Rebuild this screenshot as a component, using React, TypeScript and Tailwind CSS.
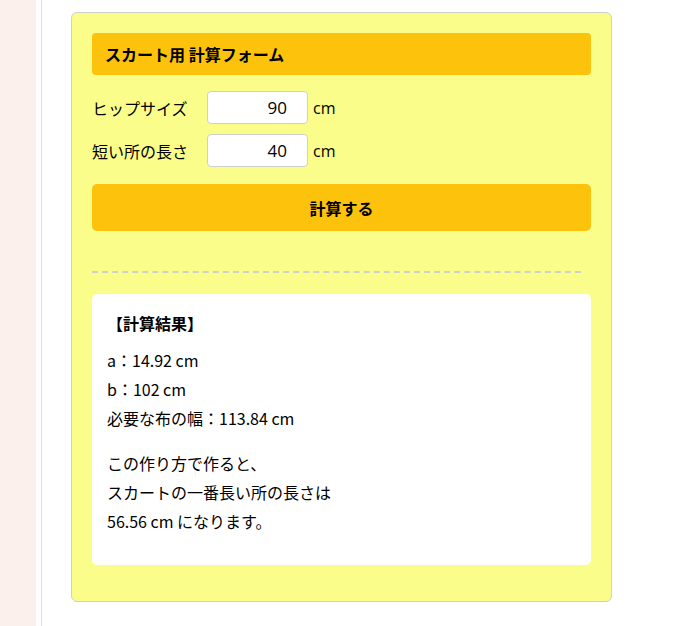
import React from "react"

function FormRow({ label, value }: { label: string; value: string }) {
  return (
    <div className="flex items-center">
      <span className="w-[115px] text-[16px] text-black">{label}</span>
      <input
        readOnly
        value={value}
        className="w-[101px] h-[33px] rounded-[4px] border border-[#cfcfcf] bg-white pr-[20px] text-right text-[17px] text-black font-['Open_Sans','Noto_Sans_CJK_JP',sans-serif] outline-none"
      />
      <span className="ml-[5px] text-[16px] font-['Open_Sans','Noto_Sans_CJK_JP',sans-serif]">cm</span>
    </div>
  )
}

export default function App() {
  return (
    <div className="flex h-[626px] bg-white font-['Noto_Sans_CJK_JP',sans-serif] text-black">
      <div className="w-[36px] bg-[#fcf0ec]" />
      <div className="w-[5px]" />
      <div className="w-px bg-[#dddddd]" />
      <div className="pl-[29px] pt-[12px]">
        <div className="w-[541px] rounded-[6px] border border-[#cfcfcf] bg-[#fafd8a] px-[20px] pt-[20px] pb-[36px]">
          <div className="flex h-[42px] items-center rounded-[4px] bg-[#fdc20b] pl-[13px] text-[16px] font-bold">
            スカート用 計算フォーム
          </div>

          <div className="mt-[16px] flex flex-col gap-[10px]">
            <FormRow label="ヒップサイズ" value="90" />
            <FormRow label="短い所の長さ" value="40" />
          </div>

          <button className="mt-[17px] flex h-[47px] w-full items-center justify-center rounded-[5px] bg-[#fdc20b] text-[16px] font-bold">
            計算する
          </button>

          <div className="mt-[40px] mr-[10px] border-t-2 border-dashed border-[#d0d0d0]" />

          <div className="mt-[21px] rounded-[5px] bg-white px-[15px] pt-[15px] pb-[29px] text-[16px] leading-[29px]">
            <p className="mb-[8px] text-[16px] font-bold">【計算結果】</p>
            <p>a：14.92 cm</p>
            <p>b：102 cm</p>
            <p>必要な布の幅：113.84 cm</p>
            <p className="mt-[16px]">
              この作り方で作ると、
              <br />
              スカートの一番長い所の長さは
              <br />
              56.56 cm になります。
            </p>
          </div>
        </div>
      </div>
    </div>
  )
}
